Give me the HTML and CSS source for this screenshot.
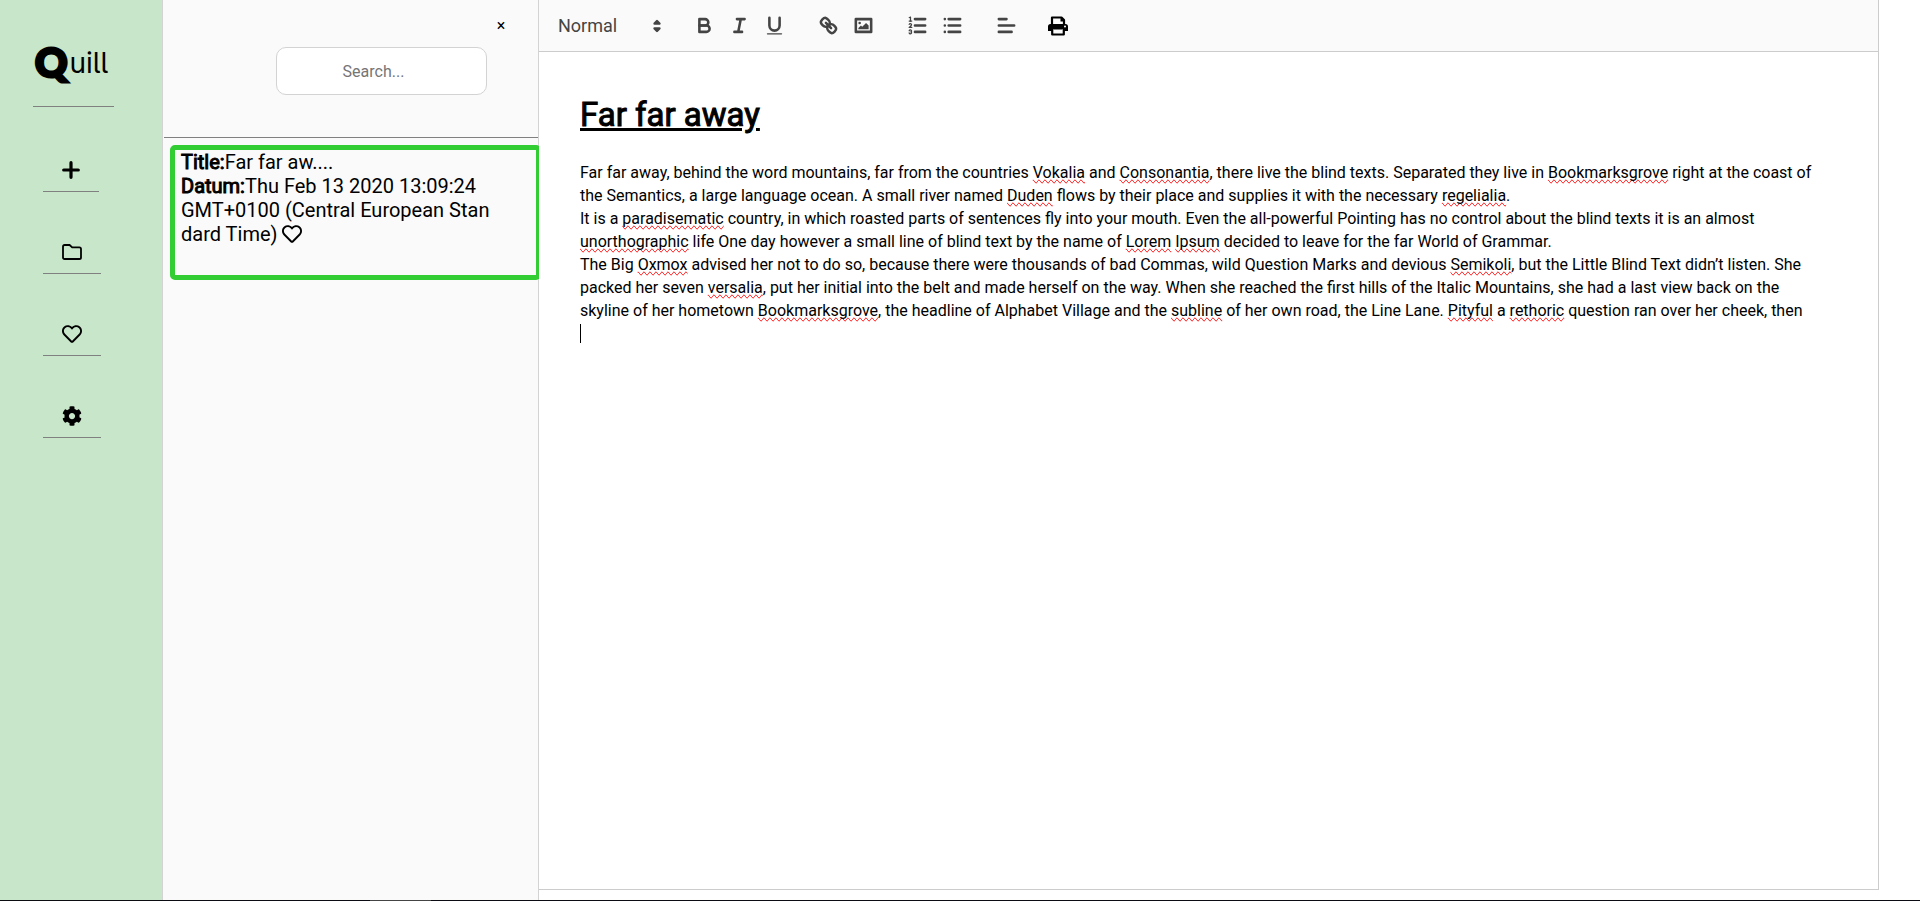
FILE: index.html
```html
<!DOCTYPE html>
<html lang="en">
<head>
<meta charset="utf-8">
<title>Quill</title>
<link rel="stylesheet" href="styles.css">
</head>
<body>
<div class="app">
  <nav class="sidebar" aria-label="Main">
    <div class="logo"><span class="logo-initial">Q</span><span class="logo-rest">uill</span></div>
    <button class="nav-item nav-add" type="button" aria-label="New note">
      <svg viewBox="-1 -1 20 20" width="20" height="20"><path d="M9 1.700v14.600M1.700 9h14.600" fill="none" stroke="#000" stroke-width="3.200" stroke-linecap="round"/></svg>
    </button>
    <button class="nav-item" type="button" aria-label="Notes">
      <svg viewBox="0 -2 20 20" width="20" height="20"><path d="M2.600 1h5l2.600 2.400h7.200q1.600 0 1.600 1.600v8.400q0 1.600-1.600 1.600H2.600Q1 15 1 13.400V2.600Q1 1 2.600 1z" fill="none" stroke="#000" stroke-width="1.800"/></svg>
    </button>
    <button class="nav-item" type="button" aria-label="Favourites">
      <svg viewBox="0 0 512 512" width="20" height="20"><path d="M458.400 64.300C400.600 15.700 311.300 23 256 79.300 200.700 23 111.400 15.600 53.600 64.300-21.600 127.600-10.600 230.800 43 285.500l175.400 178.700c10 10.200 23.400 15.900 37.600 15.900 14.300 0 27.600-5.600 37.600-15.800L469 285.600c53.500-54.700 64.700-157.900-10.600-221.300zm-23.600 187.500L259.400 430.500c-2.400 2.400-4.400 2.400-6.800 0L77.200 251.800c-36.500-37.200-43.900-107.600 7.300-150.700 38.900-32.700 98.900-27.800 136.500 10.500l35 35.700 35-35.700c37.800-38.500 97.800-43.200 136.500-10.600 51.100 43.100 43.500 113.900 7.300 150.800z"/></svg>
    </button>
    <button class="nav-item" type="button" aria-label="Settings">
      <svg viewBox="0 0 512 512" width="20" height="20"><path d="M487.400 315.700l-42.600-24.600c4.300-23.200 4.300-47 0-70.200l42.600-24.600c4.900-2.800 7.100-8.600 5.500-14-11.100-35.600-30-67.800-54.700-94.600-3.800-4.100-10-5.100-14.800-2.300L380.800 110c-17.900-15.400-38.500-27.300-60.800-35.100V25.800c0-5.600-3.900-10.500-9.400-11.700-36.700-8.200-74.300-7.800-109.200 0-5.500 1.200-9.400 6.100-9.400 11.700V75c-22.200 7.900-42.800 19.800-60.800 35.100L88.700 85.500c-4.900-2.800-11-1.900-14.800 2.300-24.700 26.700-43.600 58.900-54.700 94.600-1.700 5.400.6 11.200 5.500 14L67.300 221c-4.300 23.200-4.300 47 0 70.200l-42.600 24.600c-4.900 2.800-7.100 8.600-5.500 14 11.100 35.600 30 67.800 54.700 94.600 3.800 4.100 10 5.100 14.800 2.300l42.600-24.600c17.900 15.400 38.500 27.300 60.800 35.100v49.200c0 5.600 3.900 10.500 9.400 11.700 36.700 8.200 74.300 7.800 109.200 0 5.500-1.200 9.400-6.100 9.400-11.700v-49.200c22.200-7.900 42.800-19.800 60.800-35.100l42.600 24.600c4.900 2.800 11 1.900 14.800-2.300 24.700-26.700 43.600-58.900 54.700-94.600 1.500-5.500-.7-11.300-5.600-14.100zM256 336c-44.100 0-80-35.900-80-80s35.900-80 80-80 80 35.900 80 80-35.900 80-80 80z"/></svg>
    </button>
  </nav>

  <aside class="notes">
    <header class="notes-head">
      <button class="close" type="button" aria-label="Close">×</button>
      <input class="search" type="text" placeholder="Search..." aria-label="Search notes">
    </header>
    <article class="note">
      <div><b class="faux">Title:</b>Far far aw....</div>
      <div><b class="faux">Datum:</b>Thu Feb 13 2020 13:09:24 GMT+0100 (Central European Standard Time) <svg class="note-heart" viewBox="0 0 512 512" width="20" height="20"><path d="M458.400 64.300C400.600 15.700 311.300 23 256 79.300 200.700 23 111.400 15.600 53.600 64.300-21.600 127.600-10.600 230.800 43 285.500l175.400 178.700c10 10.200 23.400 15.900 37.600 15.900 14.300 0 27.600-5.600 37.600-15.800L469 285.600c53.500-54.700 64.700-157.900-10.600-221.300zm-23.600 187.500L259.400 430.500c-2.400 2.400-4.400 2.400-6.800 0L77.200 251.800c-36.500-37.200-43.900-107.600 7.300-150.700 38.900-32.700 98.900-27.800 136.500 10.500l35 35.700 35-35.700c37.800-38.500 97.800-43.200 136.500-10.600 51.100 43.100 43.500 113.900 7.300 150.800z"/></svg></div>
    </article>
  </aside>

  <main class="editor">
    <div class="toolbar" role="toolbar" aria-label="Formatting">
      <div class="picker">
        <select class="picker-select" aria-label="Text style"><option>Normal</option><option>Heading 1</option><option>Heading 2</option></select>
        <svg class="picker-arrows" viewBox="0 0 18 18" width="22" height="22"><polygon class="tri" points="7 11 9 13 11 11 7 11"/><polygon class="tri" points="7 7 9 5 11 7 7 7"/></svg>
      </div>
      <div class="group">
        <button type="button" aria-label="Bold"><svg viewBox="0 0 18 18"><path class="s" d="M5,4H9.500A2.500,2.500,0,0,1,12,6.500v0A2.500,2.500,0,0,1,9.500,9H5A0,0,0,0,1,5,9V4A0,0,0,0,1,5,4Z"/><path class="s" d="M5,9h5.500A2.500,2.500,0,0,1,13,11.500v0A2.500,2.500,0,0,1,10.500,14H5a0,0,0,0,1,0,0V9A0,0,0,0,1,5,9Z"/></svg></button>
        <button type="button" aria-label="Italic"><svg viewBox="0 0 18 18"><path class="s" d="M7 4H13M5 14H11M8 14L10 4"/></svg></button>
        <button type="button" aria-label="Underline"><svg viewBox="0 0 18 18"><path class="s" d="M5,3V9a4.012,4.012,0,0,0,4,4H9a4.012,4.012,0,0,0,4-4V3"/><rect class="f" height="1" rx=".5" ry=".5" width="12" x="3" y="15"/></svg></button>
      </div>
      <div class="group">
        <button type="button" aria-label="Link"><svg viewBox="0 0 18 18"><path class="s" d="M7 7L11 11"/><path class="s" d="M8.900,4.577a3.476,3.476,0,0,1,.36,4.679A3.476,3.476,0,0,1,4.577,8.900C3.185,7.500,2.035,6.400,4.217,4.217S7.500,3.185,8.900,4.577Z"/><path class="s" d="M13.423,9.100a3.476,3.476,0,0,0-4.679-.36,3.476,3.476,0,0,0,.36,4.679c1.392,1.392,2.500,2.542,4.679.36S14.815,10.500,13.423,9.100Z"/></svg></button>
        <button type="button" aria-label="Image"><svg viewBox="0 0 18 18"><rect class="s" height="10" width="12" x="3" y="4"/><circle class="f" cx="6" cy="7" r="1"/><polyline class="f" points="5 12 5 11 7 9 8 10 11 7 13 9 13 12 5 12"/></svg></button>
      </div>
      <div class="group">
        <button type="button" aria-label="Numbered list"><svg viewBox="0 0 18 18"><path class="s" d="M7 4H15M7 9H15M7 14H15"/><path class="s thin" d="M2.500 5.500H4.500"/><path class="f" d="M3.500,6A0.500,0.500,0,0,1,3,5.500V3.085l-0.276.138A0.500,0.500,0,0,1,2.053,3c-0.124-.247-0.023-0.324.224-0.447l1-.5A0.500,0.500,0,0,1,4,2.500v3A0.500,0.500,0,0,1,3.500,6Z"/><path class="s thin" d="M4.500,10.500h-2c0-.234,1.850-1.076,1.850-2.234A0.959,0.959,0,0,0,2.500,8.156"/><path class="s thin" d="M2.500,14.846a0.959,0.959,0,0,0,1.850-.109A0.700,0.700,0,0,0,3.750,14a0.688,0.688,0,0,0,.6-0.736,0.959,0.959,0,0,0-1.850-.109"/></svg></button>
        <button type="button" aria-label="Bullet list"><svg viewBox="0 0 18 18"><path class="s" d="M6 4H15M6 9H15M6 14H15M3 4H3M3 9H3M3 14H3"/></svg></button>
      </div>
      <div class="group">
        <button type="button" aria-label="Align"><svg viewBox="0 0 18 18"><path class="s" d="M3 9H15M3 14H13M3 4H9"/></svg></button>
      </div>
      <div class="group">
        <button class="print" type="button" aria-label="Print"><svg viewBox="0 0 20 20"><path d="M4 8.500V1.500h9.500L16 4v4.500M4.200 14v4.500h11.600V14" fill="none" stroke="#000" stroke-width="2.200" stroke-linejoin="round"/><path d="M12.500 1v4.500H16.500z"/><path fill-rule="evenodd" d="M2.500 8h15Q20 8 20 10.500V15h-5v-1.500H5V15H0v-4.500Q0 8 2.500 8zM16 10.500a1 1 0 1 0 2 0 1 1 0 1 0-2 0z"/></svg></button>
      </div>
    </div>
    <div class="document" role="textbox" aria-multiline="true" aria-label="Note">
      <h1 class="faux"><u>Far far away</u></h1>
      <p>Far far away, behind the word mountains, far from the countries <span class="sp">Vokalia</span> and <span class="sp">Consonantia</span>, there live the blind texts. Separated they live in <span class="sp">Bookmarksgrove</span> right at the coast of the Semantics, a large language ocean. A small river named <span class="sp">Duden</span> flows by their place and supplies it with the necessary <span class="sp">regelialia</span>.</p>
      <p>It is a <span class="sp">paradisematic</span> country, in which roasted parts of sentences fly into your mouth. Even the all-powerful Pointing has no control about the blind texts it is an almost <span class="sp">unorthographic</span> life One day however a small line of blind text by the name of <span class="sp">Lorem</span> <span class="sp">Ipsum</span> decided to leave for the far World of Grammar.</p>
      <p>The Big <span class="sp">Oxmox</span> advised her not to do so, because there were thousands of bad Commas, wild Question Marks and devious <span class="sp">Semikoli</span>, but the Little Blind Text didn’t listen. She packed her seven <span class="sp">versalia</span>, put her initial into the belt and made herself on the way. When she reached the first hills of the Italic Mountains, she had a last view back on the skyline of her hometown <span class="sp">Bookmarksgrove</span>, the headline of Alphabet Village and the <span class="sp">subline</span> of her own road, the Line Lane. <span class="sp">Pityful</span> a <span class="sp">rethoric</span> question ran over her cheek, then</p>
      <p class="caret-line"><span class="caret"></span></p>
    </div>
  </main>
</div>
<div class="bottom-edge"><span></span></div>
</body>
</html>
```
FILE: styles.css
```css
* { box-sizing: border-box; }

body {
  margin: 0;
  min-height: 100vh;
  display: flex;
  flex-direction: column;
  background: #fff;
  color: #000;
  font-family: Roboto, "Liberation Sans", sans-serif;
  font-size: 16px;
}

button {
  border: 0;
  padding: 0;
  background: none;
  font: inherit;
  color: inherit;
}

svg { display: block; }

.app {
  flex: 1;
  display: grid;
  grid-template-columns: 163px 376px minmax(0, 1fr);
}

.bottom-edge {
  height: 1px;
  background: #0b0b12;
}
.bottom-edge span {
  display: block;
  width: 61px;
  height: 1px;
  margin-left: 370px;
  background: #444;
}

.faux {
  font-weight: 400;
  -webkit-text-stroke: 1px #000;
}

/* Sidebar */
.sidebar {
  display: flex;
  flex-direction: column;
  align-items: flex-start;
  background: #c8e6c9;
  border-right: 1px solid #d3d3d3;
}
.logo {
  display: flex;
  align-items: flex-start;
  gap: 2px;
  width: 81px;
  height: 107px;
  margin-left: 33px;
  padding: 38px 0 0 2px;
  border-bottom: 1px solid #808080;
}
.logo-initial {
  font-family: Lato, sans-serif;
  font-weight: 900;
  font-size: 40px;
  line-height: 48px;
  -webkit-text-stroke: 3px #000;
}
.logo-rest {
  font-family: Inter, sans-serif;
  font-size: 28px;
  line-height: 50px;
  font-feature-settings: "cv05", "ss02";
}
.nav-item {
  display: flex;
  flex-direction: column;
  justify-content: flex-end;
  width: 58px;
  height: 82px;
  margin-left: 43px;
  padding: 0 0 11px 19px;
  border-bottom: 1px solid #808080;
}
.nav-add {
  width: 56px;
  height: 85px;
  padding-left: 18px;
}

/* Notes list */
.notes {
  background: #fafafa;
  border-right: 1px solid #d3d3d3;
}
.notes-head {
  display: flex;
  flex-direction: column;
  align-items: flex-end;
  height: 138px;
  margin-left: 1px;
  padding: 16px 51px 0 0;
  border-bottom: 1px solid #808080;
}
.close {
  width: 20px;
  height: 20px;
  margin-right: -24px;
  line-height: 20px;
}
.search {
  width: 211px;
  height: 48px;
  margin-top: 11px;
  padding: 0 24px 0 8px;
  border: 1px solid #d3d3d3;
  border-radius: 10px;
  background: #fff;
  font: inherit;
  text-align: center;
}
.search::placeholder { color: #757575; }
.note {
  height: 135px;
  margin: 7px -3px 0 7px;
  padding: 0 44px 0 6px;
  border: 5px solid #32cd32;
  border-radius: 5px;
  font-size: 20px;
  line-height: 24px;
  word-break: break-all;
}
.note-heart {
  display: inline-block;
  vertical-align: -3px;
}

/* Editor: overlaps the right edge of the selected note */
.editor {
  position: relative;
  display: flex;
  flex-direction: column;
  margin: 0 41px 10px 0;
  background: #fff;
  border: 1px solid #ccc;
  border-width: 0 1px 1px 0;
}
.toolbar {
  display: flex;
  align-items: center;
  gap: 19px;
  height: 52px;
  padding: 0 10px;
  background: #fafafa;
  border-bottom: 1px solid #ccc;
}
.picker {
  display: flex;
  align-items: center;
  width: 119px;
}
.picker-select {
  flex: 1;
  min-width: 0;
  padding: 0 0 0 9px;
  border: 0;
  background: none;
  color: #444;
  font: 18px Roboto, sans-serif;
  appearance: none;
}
.picker-arrows { flex: none; }
.group { display: flex; }
.group button {
  width: 35px;
  padding: 4px 6px;
}
.group svg { width: 23px; height: 23px; }
.group .print { width: 30px; padding: 4px 5px; }
.group .print svg { width: 20px; height: 20px; }
.s, .tri {
  fill: none;
  stroke: #444;
  stroke-width: 2;
  stroke-linecap: round;
  stroke-linejoin: round;
}
.tri { fill: #444; }
.thin { stroke-width: 1; }
.f { fill: #444; }

.document {
  flex: 1;
  padding: 40px 56px 0 41px;
  line-height: 23px;
}
.document h1 {
  margin: 0 0 23px;
  font-size: 33px;
  line-height: 46px;
}
.document p { margin: 0; }
.sp { text-decoration-line: spelling-error; }
.caret-line { padding-top: 2px; }
.caret {
  display: block;
  width: 1px;
  height: 19px;
  background: #000;
}
```
